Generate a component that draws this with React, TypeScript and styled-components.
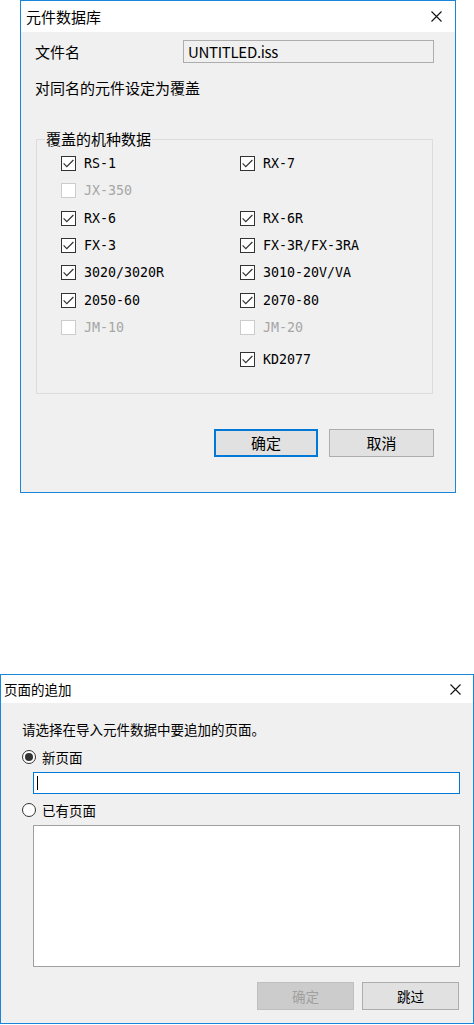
import React from "react";
import styled, { createGlobalStyle } from "styled-components";

const Global = createGlobalStyle`
  html, body { margin: 0; padding: 0; background: #ffffff; }
  body { font-family: "Noto Sans CJK SC", "Noto Sans", sans-serif; color: #000; }
  * { box-sizing: border-box; }
`;

const Page = styled.div`
  display: flex;
  flex-direction: column;
  width: 474px;
`;

const Dialog = styled.div<{ $w: number; $h: number; $ml: number; $mt: number; $fs: number }>`
  width: ${(p) => p.$w}px;
  height: ${(p) => p.$h}px;
  margin-left: ${(p) => p.$ml}px;
  margin-top: ${(p) => p.$mt}px;
  border: 1px solid #1a86d9;
  background: #f0f0f0;
  display: flex;
  flex-direction: column;
  font-size: ${(p) => p.$fs}px;
`;

const TitleBar = styled.div<{ $h: number; $pl: number }>`
  height: ${(p) => p.$h}px;
  flex: none;
  background: #ffffff;
  display: flex;
  align-items: center;
  justify-content: space-between;
  padding-left: ${(p) => p.$pl}px;
  line-height: ${(p) => p.$h}px;
`;

const TitleText = styled.span`
  white-space: nowrap;
`;

const CloseBox = styled.div<{ $w: number }>`
  width: ${(p) => p.$w}px;
  height: 100%;
  display: flex;
  align-items: center;
  justify-content: center;
`;

const CloseIcon = () => (
  <svg width="11" height="11" viewBox="0 0 11 11">
    <path d="M0.5 0.5 L10.5 10.5 M10.5 0.5 L0.5 10.5" stroke="#111" strokeWidth="1.1" fill="none" />
  </svg>
);

const Body = styled.div<{ $pt?: number; $pl?: number }>`
  flex: 1;
  display: flex;
  flex-direction: column;
  padding-top: ${(p) => p.$pt ?? 0}px;
  padding-left: ${(p) => p.$pl ?? 0}px;
`;

const FileRow = styled.div`
  margin-top: 8px;
  display: flex;
  align-items: center;
  height: 23px;
  padding-left: 14px;
`;

const FileLabel = styled.span`
  width: 148px;
  line-height: 20px;
`;

const ReadOnlyField = styled.div`
  width: 251px;
  height: 23px;
  border: 1px solid #adadad;
  background: #f0f0f0;
  padding-left: 4px;
  display: flex;
  align-items: center;
  font-size: 15px;
  line-height: 20px;
  letter-spacing: -0.3px;
`;

const Line = styled.div<{ $mt: number; $lh: number; $pl?: number }>`
  margin-top: ${(p) => p.$mt}px;
  line-height: ${(p) => p.$lh}px;
  height: ${(p) => p.$lh}px;
  padding-left: ${(p) => p.$pl ?? 0}px;
  white-space: nowrap;
`;

const Group = styled.fieldset`
  margin: 31px 0 0 15px;
  width: 397px;
  padding: 1px 0 20px 0;
  border: 1px solid #dcdcdc;
  min-inline-size: 0;
`;

const Legend = styled.legend`
  margin-left: 8px;
  padding: 0 1px;
  line-height: 20px;
  font-size: 15px;
`;

const CheckRow = styled.div<{ $mt?: number }>`
  display: grid;
  grid-template-columns: 179px 1fr;
  height: 27.3px;
  margin-top: ${(p) => p.$mt ?? 0}px;
  padding-left: 24px;
  align-items: center;
`;

const CheckItem = styled.div<{ $disabled?: boolean }>`
  display: flex;
  align-items: center;
  gap: 8px;
  font-family: "DejaVu Sans Mono", "Liberation Mono", monospace;
  font-size: 13.3px;
  color: ${(p) => (p.$disabled ? "#a6a6a6" : "#000")};
  white-space: nowrap;
`;

const Box = styled.span<{ $disabled?: boolean }>`
  width: 15px;
  height: 15px;
  flex: none;
  border: 1px solid ${(p) => (p.$disabled ? "#cccccc" : "#333333")};
  background: #ffffff;
  display: flex;
  align-items: center;
  justify-content: center;
`;

const Check = ({ checked, disabled, label }: { checked: boolean; disabled?: boolean; label: string }) => (
  <CheckItem $disabled={disabled}>
    <Box $disabled={disabled}>
      {checked && (
        <svg width="13" height="13" viewBox="0 0 13 13">
          <path d="M1.6 6.4 L4.8 9.6 L11.4 3" stroke="#333" strokeWidth="1.2" fill="none" />
        </svg>
      )}
    </Box>
    <span>{label}</span>
  </CheckItem>
);

const ButtonRow = styled.div<{ $mt: number; $pr: number; $gap: number }>`
  display: flex;
  justify-content: flex-end;
  gap: ${(p) => p.$gap}px;
  margin-top: ${(p) => p.$mt}px;
  padding-right: ${(p) => p.$pr}px;
`;

const Button = styled.div<{ $w: number; $h: number; $focused?: boolean; $disabled?: boolean }>`
  width: ${(p) => p.$w}px;
  height: ${(p) => p.$h}px;
  display: flex;
  align-items: center;
  justify-content: center;
  background: ${(p) => (p.$disabled ? "#cccccc" : "#e1e1e1")};
  border: ${(p) =>
    p.$focused ? "2px solid #0078d7" : p.$disabled ? "1px solid #bfbfbf" : "1px solid #adadad"};
  color: ${(p) => (p.$disabled ? "#a0a0a0" : "#000")};
  line-height: 20px;
`;

const RadioRow = styled.div<{ $mt: number }>`
  display: flex;
  align-items: center;
  gap: 6px;
  height: 18px;
  margin-top: ${(p) => p.$mt}px;
  line-height: 18px;
`;

const RadioCircle = styled.span<{ $on?: boolean }>`
  width: 14px;
  height: 14px;
  flex: none;
  border-radius: 50%;
  border: 1px solid #333;
  background: #fff;
  display: flex;
  align-items: center;
  justify-content: center;
  &::after {
    content: "";
    display: ${(p) => (p.$on ? "block" : "none")};
    width: 8px;
    height: 8px;
    border-radius: 50%;
    background: #333;
  }
`;

const TextInput = styled.div`
  margin-top: 6px;
  margin-left: 11px;
  width: 427px;
  height: 22px;
  border: 1px solid #0078d7;
  background: #fff;
  display: flex;
  align-items: center;
  padding-left: 3px;
`;

const Caret = styled.span`
  width: 1px;
  height: 14px;
  background: #000;
`;

const ListBox = styled.div`
  margin-top: 6px;
  margin-left: 11px;
  width: 427px;
  height: 142px;
  border: 1px solid #a0a0a0;
  background: #fff;
`;

const leftCol = [
  { label: "RS-1", checked: true },
  { label: "JX-350", checked: false, disabled: true },
  { label: "RX-6", checked: true },
  { label: "FX-3", checked: true },
  { label: "3020/3020R", checked: true },
  { label: "2050-60", checked: true },
  { label: "JM-10", checked: false, disabled: true },
];
const rightCol: ({ label: string; checked: boolean; disabled?: boolean } | null)[] = [
  { label: "RX-7", checked: true },
  null,
  { label: "RX-6R", checked: true },
  { label: "FX-3R/FX-3RA", checked: true },
  { label: "3010-20V/VA", checked: true },
  { label: "2070-80", checked: true },
  { label: "JM-20", checked: false, disabled: true },
];

export default function App() {
  return (
    <Page>
      <Global />
      <Dialog $w={436} $h={493} $ml={20} $mt={0} $fs={15}>
        <TitleBar $h={31} $pl={5}>
          <TitleText>元件数据库</TitleText>
          <CloseBox $w={38}>
            <CloseIcon />
          </CloseBox>
        </TitleBar>
        <Body>
          <FileRow>
            <FileLabel>文件名</FileLabel>
            <ReadOnlyField>UNTITLED.iss</ReadOnlyField>
          </FileRow>
          <Line $mt={15} $lh={20} $pl={14}>
            对同名的元件设定为覆盖
          </Line>
          <Group>
            <Legend>覆盖的机种数据</Legend>
            {leftCol.map((l, i) => {
              const r = rightCol[i];
              return (
                <CheckRow key={l.label}>
                  <Check checked={l.checked} disabled={l.disabled} label={l.label} />
                  {r ? <Check checked={r.checked} disabled={r.disabled} label={r.label} /> : <span />}
                </CheckRow>
              );
            })}
            <CheckRow $mt={4.4}>
              <span />
              <Check checked label="KD2077" />
            </CheckRow>
          </Group>
          <ButtonRow $mt={35} $pr={21} $gap={11}>
            <Button $w={104} $h={28} $focused>
              确定
            </Button>
            <Button $w={105} $h={28}>
              取消
            </Button>
          </ButtonRow>
        </Body>
      </Dialog>

      <Dialog $w={474} $h={350} $ml={0} $mt={181} $fs={13.5}>
        <TitleBar $h={28} $pl={3}>
          <TitleText>页面的追加</TitleText>
          <CloseBox $w={36}>
            <CloseIcon />
          </CloseBox>
        </TitleBar>
        <Body $pt={17} $pl={21}>
          <Line $mt={0} $lh={18}>
            请选择在导入元件数据中要追加的页面。
          </Line>
          <RadioRow $mt={10}>
            <RadioCircle $on />
            <span>新页面</span>
          </RadioRow>
          <TextInput>
            <Caret />
          </TextInput>
          <RadioRow $mt={7}>
            <RadioCircle />
            <span>已有页面</span>
          </RadioRow>
          <ListBox />
          <ButtonRow $mt={15} $pr={14} $gap={8}>
            <Button $w={97} $h={28} $disabled>
              确定
            </Button>
            <Button $w={97} $h={28}>
              跳过
            </Button>
          </ButtonRow>
        </Body>
      </Dialog>
    </Page>
  );
}
